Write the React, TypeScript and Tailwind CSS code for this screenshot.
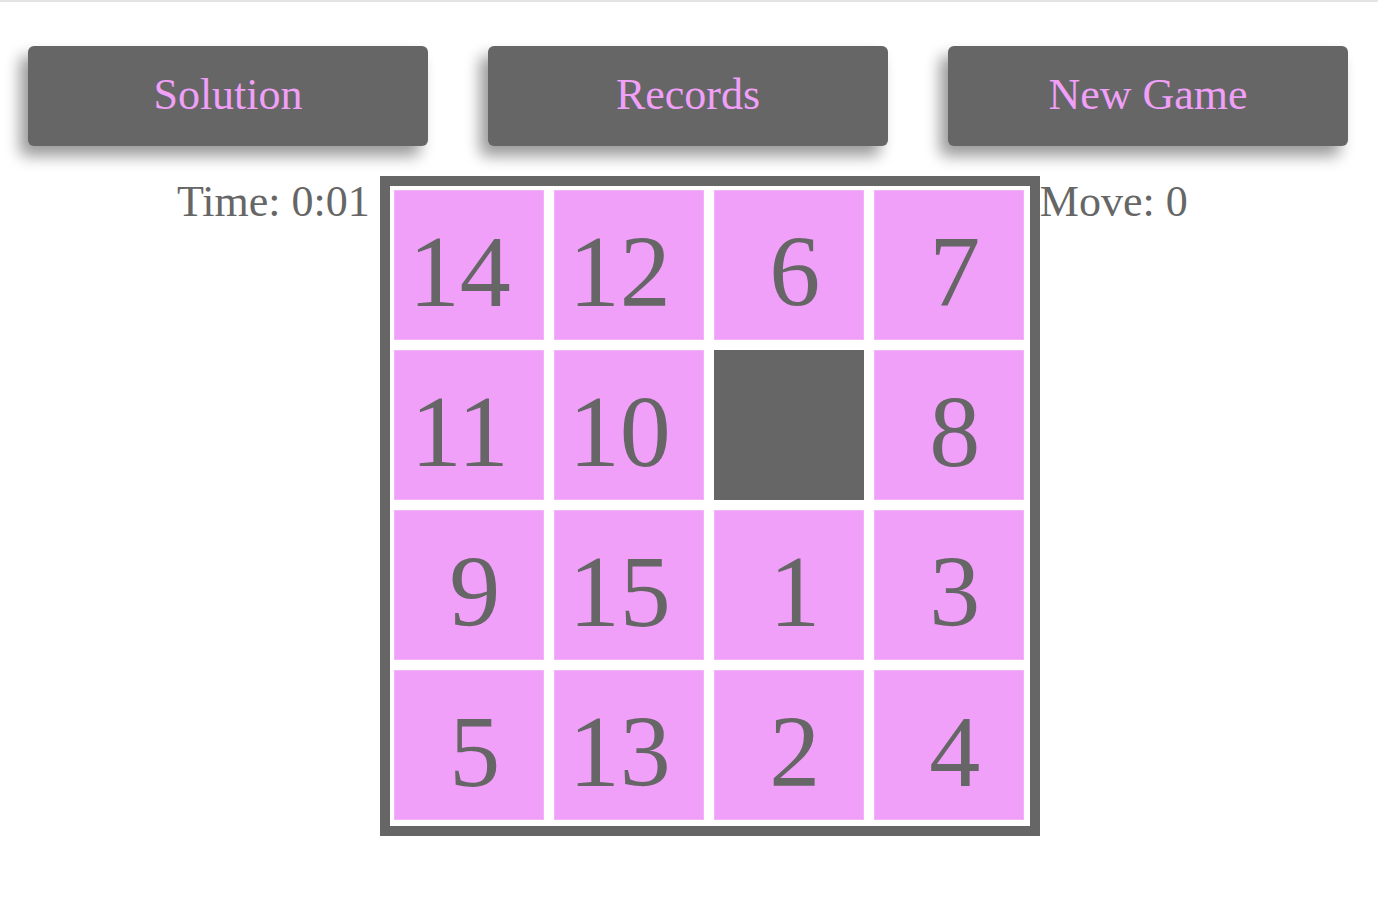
import React from "react";

const tiles: (number | null)[] = [14, 12, 6, 7, 11, 10, null, 8, 9, 15, 1, 3, 5, 13, 2, 4];

const serif = { fontFamily: '"Liberation Serif", "Times New Roman", serif' };

function Btn({ label }: { label: string }) {
  return (
    <button
      className="w-[400px] h-[100px] rounded-[6px] bg-[#666666] text-[#f0a0f8] text-[44px] leading-none pb-[2px] shadow-[-8px_10px_15px_rgba(0,0,0,0.4)]"
      style={serif}
    >
      {label}
    </button>
  );
}

export default function App() {
  return (
    <div className="min-h-[897px] bg-white border-t-2 border-[#e4e4e4]" style={serif}>
      <div className="flex gap-[60px] pl-[28px] pt-[44px]">
        <Btn label="Solution" />
        <Btn label="Records" />
        <Btn label="New Game" />
      </div>
      <div className="flex items-start pl-[177px] mt-[30px] text-[#666666]">
        <div className="text-[44px] leading-[50px] mr-[10px] mt-[1px]">Time: 0:01</div>
        <div className="border-[10px] border-[#666666] bg-white p-[4px] pr-[6px] pb-[6px]">
          <div className="grid grid-cols-4 gap-[10px]">
            {tiles.map((t, i) =>
              t === null ? (
                <div key={i} className="w-[150px] h-[150px] bg-[#666666]" />
              ) : (
                <div
                  key={i}
                  className="w-[150px] h-[150px] bg-[#f0a0f8] border border-[#f3b3f9] flex justify-center"
                >
                  <span
                    className={
                      t < 10
                        ? "text-[102px] leading-[136px] pt-[13px] pl-[12px] text-[#666666]"
                        : "text-[102px] leading-[136px] pt-[13px] pr-[18px] text-[#666666]"
                    }
                  >
                    {t}
                  </span>
                </div>
              )
            )}
          </div>
        </div>
        <div className="text-[44px] leading-[50px] mt-[1px]">Move: 0</div>
      </div>
    </div>
  );
}
